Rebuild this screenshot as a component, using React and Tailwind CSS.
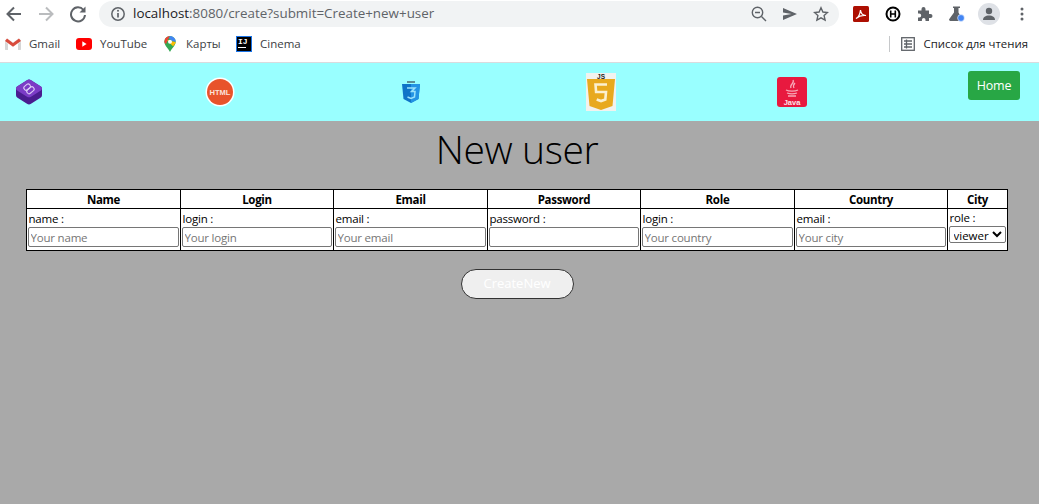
const F = "[font-family:'Open_Sans','Noto_Sans',sans-serif]";

function Back() {
  return <svg width="18" height="18" viewBox="0 0 18 18" fill="none" stroke="#5f6368" strokeWidth="2"><path d="M16 9H3M9 2.500 2.500 9 9 15.500" /></svg>;
}
function Forward() {
  return <svg width="18" height="18" viewBox="0 0 18 18" fill="none" stroke="#babcbe" strokeWidth="2"><path d="M2 9h13M9 2.500 15.500 9 9 15.500" /></svg>;
}
function Reload() {
  return <svg width="18" height="18" viewBox="0 0 18 18" fill="none"><path d="M14.500 5A7 7 0 1 0 16 10" stroke="#5f6368" strokeWidth="2" /><path d="M16.500 1.500v6h-6z" fill="#5f6368" /></svg>;
}
function Info() {
  return <svg width="16" height="16" viewBox="0 0 16 16" fill="none"><circle cx="8" cy="8" r="6.200" stroke="#5f6368" strokeWidth="1.500" /><path d="M8 7v4.500" stroke="#5f6368" strokeWidth="1.700" /><circle cx="8" cy="4.800" r="1" fill="#5f6368" /></svg>;
}
function Zoom() {
  return <svg width="16" height="16" viewBox="0 0 16 16" fill="none" stroke="#5f6368" strokeWidth="1.400"><circle cx="6.500" cy="6.500" r="5.200" /><path d="M10.500 10.500 15 15M4 6.500h5" /></svg>;
}
function Send() {
  return <svg width="16" height="14" viewBox="0 0 16 14"><path d="M1 1 15 7 1 13V8.500L9.500 7 1 5.500z" fill="#5f6368" /></svg>;
}
function Star() {
  return <svg width="16" height="16" viewBox="0 0 16 16" fill="none" stroke="#5f6368" strokeWidth="1.400"><path d="m8 1.800 1.900 4.200 4.600.5-3.400 3.100 1 4.500L8 11.800l-4.100 2.300 1-4.500L1.500 6.500l4.600-.5z" /></svg>;
}
function Pdf() {
  return <svg width="16" height="16" viewBox="0 0 16 16"><rect width="16" height="16" rx="1.500" fill="#ad0f02" /><path d="M3 12.500C5 11.500 7 8 7.500 4c.4 3.500 2.500 5.500 5.500 5.500C9.500 9 6 10 3 12.500z" fill="none" stroke="#fff" strokeWidth="1.200" /></svg>;
}
function HIcon() {
  return <svg width="16" height="16" viewBox="0 0 16 16" fill="none"><circle cx="8" cy="8" r="6.500" stroke="#000" strokeWidth="2" /><path d="M5.700 4.500v7M10.300 4.500v7M5.700 8h4.600" stroke="#000" strokeWidth="1.600" /></svg>;
}
function Puzzle() {
  return <svg width="16" height="16" viewBox="0 0 16 16"><path d="M1 4.500h3.500V3a2 2 0 0 1 4 0v1.500H12V8h1.500a2 2 0 0 1 0 4H12v3H8.500v-1.300a1.800 1.800 0 0 0-3.600 0V15H1v-3.500h1.200a2 2 0 0 0 0-4H1z" fill="#5f6368" /></svg>;
}
function Flask() {
  return <svg width="16" height="16" viewBox="0 0 16 16"><path d="M4 .5h7v1.500H9.500v4.500l3.500 6.500a1.500 1.500 0 0 1-1.300 2H1.500a1.300 1.300 0 0 1-1.200-2L5 6.500V2H4z" fill="#5f6368" /><circle cx="12" cy="12" r="3.400" fill="#4285f4" stroke="#fff" strokeWidth=".6" /></svg>;
}
function Person() {
  return <svg width="14" height="14" viewBox="0 0 14 14"><circle cx="7" cy="4" r="3.200" fill="#5f6368" /><path d="M1 13c0-3 2.500-4.500 6-4.500s6 1.500 6 4.500z" fill="#5f6368" /></svg>;
}
function Dots() {
  return <svg width="4" height="14" viewBox="0 0 4 14"><circle cx="2" cy="2" r="1.500" fill="#5f6368" /><circle cx="2" cy="7" r="1.500" fill="#5f6368" /><circle cx="2" cy="12" r="1.500" fill="#5f6368" /></svg>;
}
function GmailIcon() {
  return <svg width="16" height="12" viewBox="0 0 16 12"><path d="M0 2v10h3V4.500L8 8l5-3.500V12h3V2L13.500.5 8 4.500 2.500.5z" fill="#e8e8e8" /><path d="M0 2v2l3 2.200V12H1a1 1 0 0 1-1-1zM16 2v2l-3 2.200V12h2a1 1 0 0 0 1-1z" fill="#d6d6d6" /><path d="M0 3 2 .5 8 5l6-4.500L16 3 8 8.800z" fill="#d94c3d" /></svg>;
}
function YouTubeIcon() {
  return <svg width="16" height="12" viewBox="0 0 16 12"><rect width="16" height="12" rx="3" fill="#f00" /><path d="m6.300 3.300 4.300 2.700-4.300 2.700z" fill="#fff" /></svg>;
}
function MapsIcon() {
  return <svg width="12" height="16" viewBox="0 0 12 16"><path d="M6 16C5 13 .3 9.500.3 5.700a5.700 5.700 0 0 1 11.400 0C11.700 9.500 7 13 6 16z" fill="#34a853" /><path d="M1.200 2.600 9 10.300c1.300-1.500 2.700-3 2.700-4.600L6 5z" fill="#fbbc04" /><path d="M1.200 2.600A5.700 5.700 0 0 1 6 0L4 3.500 2 8C1 7 .3 6.500.3 5.700z" fill="#ea4335" /><path d="M6 0a5.700 5.700 0 0 1 5.700 5.700L8 5 5 2z" fill="#4285f4" /><circle cx="6" cy="5.700" r="2" fill="#fff" /></svg>;
}
function IJIcon() {
  return <span className="flex h-4 w-4 flex-col border border-[#1a73e8] bg-black px-px text-[8px] font-bold leading-[9px] text-white [font-family:'Liberation_Mono',monospace]">IJ<span className="mt-px h-px w-2 bg-white" /></span>;
}
function ListIcon() {
  return <svg width="14" height="14" viewBox="0 0 14 14" fill="none" stroke="#5f6368" strokeWidth="1.300"><rect x=".7" y=".7" width="12.600" height="12.600" /><path d="M3 4h8M3 7h8M3 10h8M5.500 2.500v9" /></svg>;
}

function Bootstrap() {
  return (
    <svg width="28" height="26" viewBox="0 0 28 26">
      <path d="M12 1.200a4 4 0 0 1 4 0l9.500 6a3 3 0 0 1 1.500 2.500v6.600a3 3 0 0 1-1.500 2.500l-9.500 6a4 4 0 0 1-4 0l-9.500-6A3 3 0 0 1 1 16.300V9.700a3 3 0 0 1 1.500-2.500z" fill="#4a1d8f" />
      <path d="M12 1.200a4 4 0 0 1 4 0l9.500 6c2 1.300 2 3.200 0 4.500L16 17.700a4 4 0 0 1-4 0l-9.500-6c-2-1.300-2-3.200 0-4.500z" fill="#7b3cc6" />
      <g transform="rotate(-40 14 9.500)" fill="none" stroke="#dccbf6" strokeWidth="1.100">
        <rect x="10" y="5" width="7" height="4.500" rx="2" />
        <rect x="10" y="9.500" width="8" height="4.500" rx="2" />
      </g>
    </svg>
  );
}
function Html() {
  return (
    <svg width="30" height="30" viewBox="0 0 30 30">
      <circle cx="15" cy="15" r="14.500" fill="#fff" />
      <circle cx="15" cy="15" r="13" fill="#e8532b" />
      <text x="15" y="17.500" textAnchor="middle" fontSize="7.500" fontWeight="800" fill="#fbe3da" fontFamily="'Liberation Sans', sans-serif">HTML</text>
    </svg>
  );
}
function Css() {
  return (
    <svg width="18" height="22" viewBox="0 0 18 22">
      <rect x="5" y="0" width="8" height="2" fill="#5e8f96" />
      <path d="M0 3h18l-1.500 15L9 22 1.500 18z" fill="#0f74c8" />
      <path d="M9 3h9l-1.500 15L9 22z" fill="#2394e4" />
      <path d="M5 7h8l-3.500 3.500H13l-.5 5.500L9 17.500 5.500 16" fill="none" stroke="#9be3fb" strokeWidth="1.500" />
    </svg>
  );
}
function Js() {
  return (
    <svg width="30" height="38" viewBox="0 0 30 38">
      <rect width="30" height="38" fill="#f2f2ee" />
      <text x="15" y="5.500" textAnchor="middle" fontSize="6.500" fontWeight="800" fill="#222" fontFamily="'Liberation Sans', sans-serif">JS</text>
      <path d="M1 6h28l-2.500 27L15 37 3.500 33z" fill="#e8a91e" />
      <path d="M21 11.500H9.500l.6 7.500H20l-.7 7.500-4.300 1.500-4.300-1.500" fill="none" stroke="#fbf0d0" strokeWidth="2.600" />
    </svg>
  );
}
function Java() {
  return (
    <svg width="30" height="30" viewBox="0 0 30 30">
      <rect width="30" height="30" rx="3" fill="#e8193f" />
      <path d="M16 3c2 3-4 5-2 8M18 6c-2 2-2 3-1 5M9 13c3 1.500 9 1.500 12 0M10 16c3 1 7 1 10 0M11 19h8" fill="none" stroke="#f7a8b8" strokeWidth="1.300" />
      <text x="15" y="27.500" textAnchor="middle" fontSize="7.500" fontWeight="800" fill="#fde3e8" fontFamily="'Liberation Sans', sans-serif">Java</text>
    </svg>
  );
}

function Bookmark({ icon, label, w, gap = "gap-2" }) {
  return (
    <div className={`flex items-center ${gap} ${w}`}>
      {icon}
      <span className="text-[11.5px] text-[#3c4043]">{label}</span>
    </div>
  );
}

const labelCls = "text-[11.5px] tracking-[-0.2px] leading-[16px]";
const inputCls = "block h-[20px] w-full rounded-[2px] border border-[#767676] bg-white px-[2px] text-[11.5px] tracking-[-0.2px] text-black placeholder:text-[#757575] " + F;

function FieldCell({ label, placeholder }) {
  return (
    <td className="border border-black px-px pt-[2px] pb-[3px] align-top">
      <div className={labelCls + " pl-px"}>{label}</div>
      <input className={inputCls} placeholder={placeholder} readOnly />
    </td>
  );
}

const headers = [
  ["Name", "w-[154px]"],
  ["Login", "w-[153px]"],
  ["Email", "w-[154px]"],
  ["Password", "w-[153px]"],
  ["Role", "w-[154px]"],
  ["Country", "w-[153px]"],
  ["City", "w-[60px]"],
];

export default function App() {
  return (
    <div className={"flex h-[504px] w-[1039px] flex-col overflow-hidden bg-[#a9a9a9] text-black " + F}>
      <div className="flex h-[27px] items-center bg-white">
        <div className="flex w-[99px] items-center pl-[5px]">
          <Back />
          <span className="ml-[14px]"><Forward /></span>
          <span className="ml-[14px]"><Reload /></span>
        </div>
        <div className="flex h-[26px] w-[740px] items-center rounded-r-[13px] rounded-l-[13px] bg-[#f1f3f4] pl-[11px] pr-[10px]">
          <Info />
          <span className="ml-[7px] flex-1 text-[13.4px] text-[#5f6368]"><span className="text-[#202124]">localhost</span>:8080/create?submit=Create+new+user</span>
          <div className="flex items-center gap-[15px]">
            <Zoom />
            <Send />
            <Star />
          </div>
        </div>
        <div className="ml-[14px] flex items-center gap-[16px]">
          <Pdf />
          <HIcon />
          <Puzzle />
          <Flask />
        </div>
        <div className="ml-[13px] flex h-[22px] w-[22px] items-center justify-center rounded-full bg-[#dee1e6]"><Person /></div>
        <div className="ml-[20px]"><Dots /></div>
      </div>

      <div className="flex h-[36px] items-center border-b border-[#d9dbde] bg-white pb-px pl-[5px] pr-[11px]">
        <Bookmark icon={<GmailIcon />} label="Gmail" w="w-[71px]" />
        <Bookmark icon={<YouTubeIcon />} label="YouTube" w="w-[88px]" />
        <Bookmark icon={<MapsIcon />} label="Карты" w="w-[72px]" gap="gap-[10px]" />
        <Bookmark icon={<IJIcon />} label="Cinema" w="w-[80px]" />
        <div className="ml-auto flex items-center">
          <div className="mr-[11px] h-4 w-px bg-[#c6c8ca]" />
          <ListIcon />
          <span className="ml-[9px] text-[11.4px] text-[#202124]">Список для чтения</span>
        </div>
      </div>

      <nav className="flex h-[58px] shrink-0 items-center bg-[#99ffff] pr-[19px]">
        <div className="ml-[15px]"><Bootstrap /></div>
        <div className="ml-[162px]"><Html /></div>
        <div className="ml-[167px]"><Css /></div>
        <div className="ml-[166px]"><Js /></div>
        <div className="ml-[161px]"><Java /></div>
        <button className="mb-[13px] ml-auto h-[29px] w-[52px] rounded-[3px] bg-[#28a745] pt-px text-[12.500px] tracking-[-0.2px] text-white">Home</button>
      </nav>

      <main className="flex flex-1 flex-col items-center">
        <h1 className="mt-[-1px] ml-[-5px] h-[57px] text-[39px] leading-[57px] font-light tracking-[-0.4px]">New user</h1>
        <table className="mt-[12px] ml-[-6px] w-[982px] table-fixed border-collapse border border-black bg-white">
          <thead>
            <tr className="h-[18px]">
              {headers.map(([h, w]) => (
                <th key={h} className={"border border-black p-0 pt-px pl-px text-center text-[11.5px] tracking-[-0.3px] leading-[17px] font-bold " + w}>{h}</th>
              ))}
            </tr>
          </thead>
          <tbody>
            <tr>
              <FieldCell label="name :" placeholder="Your name" />
              <FieldCell label="login :" placeholder="Your login" />
              <FieldCell label="email :" placeholder="Your email" />
              <FieldCell label="password :" placeholder="" />
              <FieldCell label="login :" placeholder="Your country" />
              <FieldCell label="email :" placeholder="Your city" />
              <td className="border border-black px-px pt-[1px] align-top">
                <div className={labelCls + " pl-px"}>role :</div>
                <select className={"block h-[17px] w-[57px] rounded-[2px] border border-[#767676] bg-white text-[11.5px] " + F} defaultValue="viewer">
                  <option>viewer</option>
                </select>
              </td>
            </tr>
          </tbody>
        </table>
        <button className="mt-[18px] ml-[-5px] h-[30px] w-[113px] rounded-[15px] border border-[#333] bg-[#efefef] text-[13px] text-white">CreateNew</button>
      </main>
    </div>
  );
}
